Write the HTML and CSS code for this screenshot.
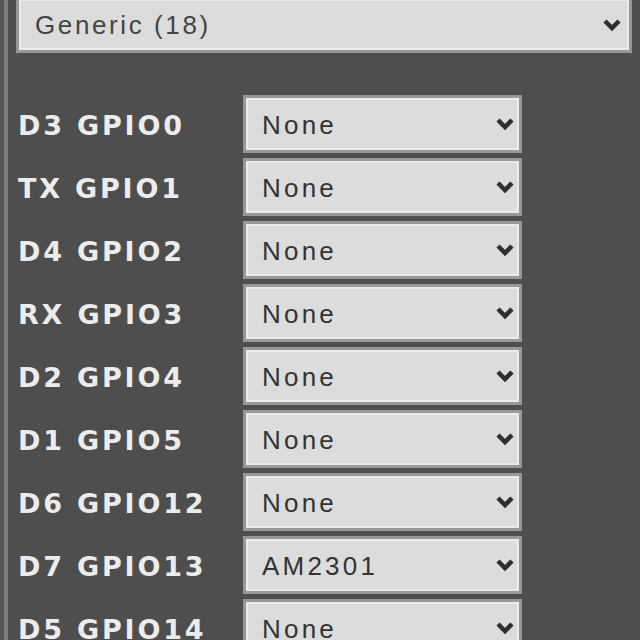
FILE: index.html
```html
<!DOCTYPE html>
<html lang="en">
<head>
  <meta charset="UTF-8">
  <meta name="viewport" content="width=device-width, initial-scale=1.0">
  <title>Configure Module</title>
  <link rel="stylesheet" href="styles.css">
</head>
<body>
  <div class="panel">
    <div class="sel sel-module">
      <span>Generic (18)</span>
      <svg class="arrow" width="18" height="14" viewBox="0 0 18 14"><path d="M2 3 L9 10 L16 3" /></svg>
    </div>

    <div class="pins">
      <label>D3 GPIO0</label>
      <div class="sel"><span>None</span><svg class="arrow" width="18" height="14" viewBox="0 0 18 14"><path d="M2 3 L9 10 L16 3" /></svg></div>
      <label>TX GPIO1</label>
      <div class="sel"><span>None</span><svg class="arrow" width="18" height="14" viewBox="0 0 18 14"><path d="M2 3 L9 10 L16 3" /></svg></div>
      <label>D4 GPIO2</label>
      <div class="sel"><span>None</span><svg class="arrow" width="18" height="14" viewBox="0 0 18 14"><path d="M2 3 L9 10 L16 3" /></svg></div>
      <label>RX GPIO3</label>
      <div class="sel"><span>None</span><svg class="arrow" width="18" height="14" viewBox="0 0 18 14"><path d="M2 3 L9 10 L16 3" /></svg></div>
      <label>D2 GPIO4</label>
      <div class="sel"><span>None</span><svg class="arrow" width="18" height="14" viewBox="0 0 18 14"><path d="M2 3 L9 10 L16 3" /></svg></div>
      <label>D1 GPIO5</label>
      <div class="sel"><span>None</span><svg class="arrow" width="18" height="14" viewBox="0 0 18 14"><path d="M2 3 L9 10 L16 3" /></svg></div>
      <label>D6 GPIO12</label>
      <div class="sel"><span>None</span><svg class="arrow" width="18" height="14" viewBox="0 0 18 14"><path d="M2 3 L9 10 L16 3" /></svg></div>
      <label>D7 GPIO13</label>
      <div class="sel"><span>AM2301</span><svg class="arrow" width="18" height="14" viewBox="0 0 18 14"><path d="M2 3 L9 10 L16 3" /></svg></div>
      <label>D5 GPIO14</label>
      <div class="sel"><span>None</span><svg class="arrow" width="18" height="14" viewBox="0 0 18 14"><path d="M2 3 L9 10 L16 3" /></svg></div>
    </div>
  </div>
</body>
</html>
```

FILE: styles.css
```css
html, body { margin: 0; padding: 0; height: 100%; overflow: hidden; }
body { background: #4e4e4e; font-family: 'Liberation Sans', Arial, sans-serif; border-left: 4px solid #575757; }
.panel { border-left: 4px solid #7e7e7e; min-height: 100%; padding-left: 8px; }

.sel { box-sizing: border-box; display: flex; align-items: center; justify-content: space-between; background: #dcdcdc; border: 3px solid #989898; box-shadow: inset 0 0 0 2px #ebebeb; color: #333; font-size: 26px; letter-spacing: 3.2px; padding: 0 5px 0 16px; }
.sel span { padding-top: 2px; }
.arrow path { fill: none; stroke: #2e2e2e; stroke-width: 4.5; stroke-linecap: butt; stroke-linejoin: miter; }

.sel-module { width: 616px; height: 57px; margin-top: -4px; padding-right: 8px; color: #444; letter-spacing: 2.6px; }

.pins { display: grid; grid-template-columns: 225px 279px; row-gap: 5px; margin-top: 42px; padding-left: 2px; }
.pins label { display: flex; align-items: center; padding-top: 2px; color: #ececec; font-family: 'DejaVu Sans', Verdana, sans-serif; font-weight: 700; font-size: 27px; letter-spacing: 2.8px; }
.pins .sel { height: 58px; }
```
